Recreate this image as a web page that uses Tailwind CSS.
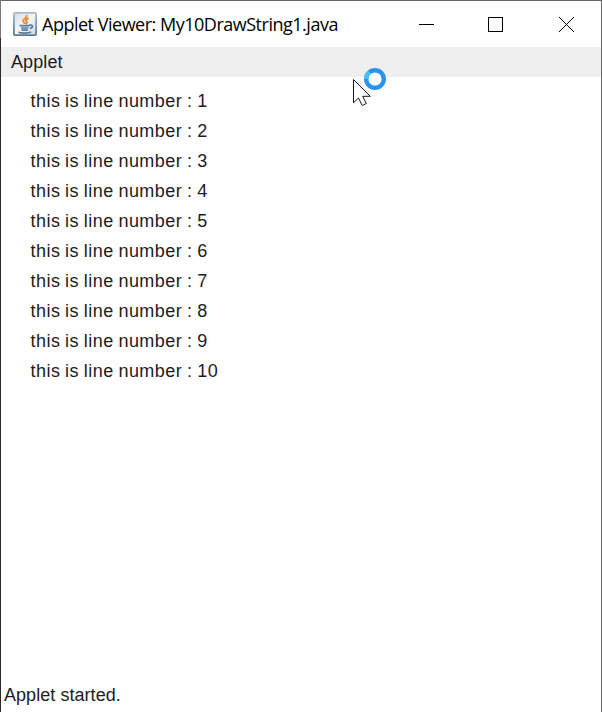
<!DOCTYPE html>
<html lang="en">
<head>
<meta charset="utf-8">
<title>Applet Viewer</title>
<script src="https://cdn.jsdelivr.net/npm/@tailwindcss/browser@4"></script>
</head>
<body class="w-[602px] h-[712px] overflow-hidden bg-white">
<div class="relative flex flex-col w-[602px] h-[712px] bg-white border-t border-l border-r border-t-[#666] border-l-[#2b2b2b] border-r-[#666] font-['Liberation_Sans',Arial,sans-serif] text-[18px] text-[#1c1c1c]">
  <div class="absolute -left-px -top-px w-px h-[38px] bg-[#777]"></div>
  <header class="flex items-center h-[46px] shrink-0 pl-3 text-black">
    <svg class="size-6 shrink-0" viewBox="0 0 24 24" fill="none">
      <defs>
        <linearGradient id="tile" x1="0" y1="0" x2="0" y2="1"><stop stop-color="#a9bccb"/><stop offset="1" stop-color="#557b99"/></linearGradient>
        <linearGradient id="face" x1="0" y1="0" x2="1" y2="1"><stop stop-color="#d5dde3"/><stop offset=".5" stop-color="#f6f6f6"/><stop offset="1" stop-color="#cbd5dd"/></linearGradient>
      </defs>
      <rect x=".9" y=".9" width="22.2" height="22.2" rx="1.2" fill="url(#face)" stroke="url(#tile)" stroke-width="1.8"/>
      <path d="M13.5 3c1.4 3-4.2 3.7-3.2 6.2.3 1 1.2 1.7 1.2 2.8M15.7 6.3c-2.5.8-3.4 2-2.2 3.3.9 1 .2 1.8-.7 2.5" stroke="#f08c3a" stroke-width="2"/>
      <path d="M6.5 13.7h10M16.5 13.2c4-.8 3.7 2.6.3 3.3M8 16h7.5M8.5 18.2h6.3M5.5 20.2c3 1.2 10 1.1 12.5-.2" stroke="#547b99" stroke-width="1.7"/>
    </svg>
    <h1 class="ml-[5px] w-[330px] shrink-0 whitespace-nowrap font-['Open_Sans','Noto_Sans',sans-serif] text-[18px] leading-[26px] tracking-[-0.49px]">Applet Viewer: My10DrawString1.java</h1>
    <svg class="ml-[46px] w-[157px] h-4 shrink-0" viewBox="0 0 157 16" fill="none" stroke="#000">
      <path d="M1 8.5h15" />
      <rect x="70.5" y="1.5" width="14" height="14"/>
      <path d="M141 1l15 15M156 1l-15 15"/>
    </svg>
  </header>
  <nav class="h-[30px] shrink-0 bg-[#efefef] pl-2.5 leading-[30px] tracking-[0.1px]">Applet</nav>
  <main class="flex-1 pl-[29.5px] pt-[9px]">
    <ul class="leading-[30px] tracking-[0.46px] [word-spacing:-0.7px]">
      <li>this is line number : 1</li>
      <li>this is line number : 2</li>
      <li>this is line number : 3</li>
      <li>this is line number : 4</li>
      <li>this is line number : 5</li>
      <li>this is line number : 6</li>
      <li>this is line number : 7</li>
      <li>this is line number : 8</li>
      <li>this is line number : 9</li>
      <li>this is line number : 10</li>
    </ul>
  </main>
  <footer class="h-[34px] shrink-0 pl-[3px] leading-[34px] tracking-[0.05px]">Applet started.</footer>
  <svg class="absolute left-[350px] top-[64px] w-[40px] h-[44px]" viewBox="351 65 40 44" fill="none">
    <path d="M353.5 79.5v23.3l5-4.8 3.7 7.5 4.1-2-3.6-7.2h7.6z" fill="#fff" stroke="#171721"/>
    <circle cx="375" cy="79" r="8.8" stroke="#2b93ee" stroke-width="4.4" fill="#fff"/>
    <path d="M366.2 79a8.8 8.8 0 0 1 3.3-6.9" stroke="#40c4ff" stroke-width="4.4"/>
  </svg>
</div>
</body>
</html>
